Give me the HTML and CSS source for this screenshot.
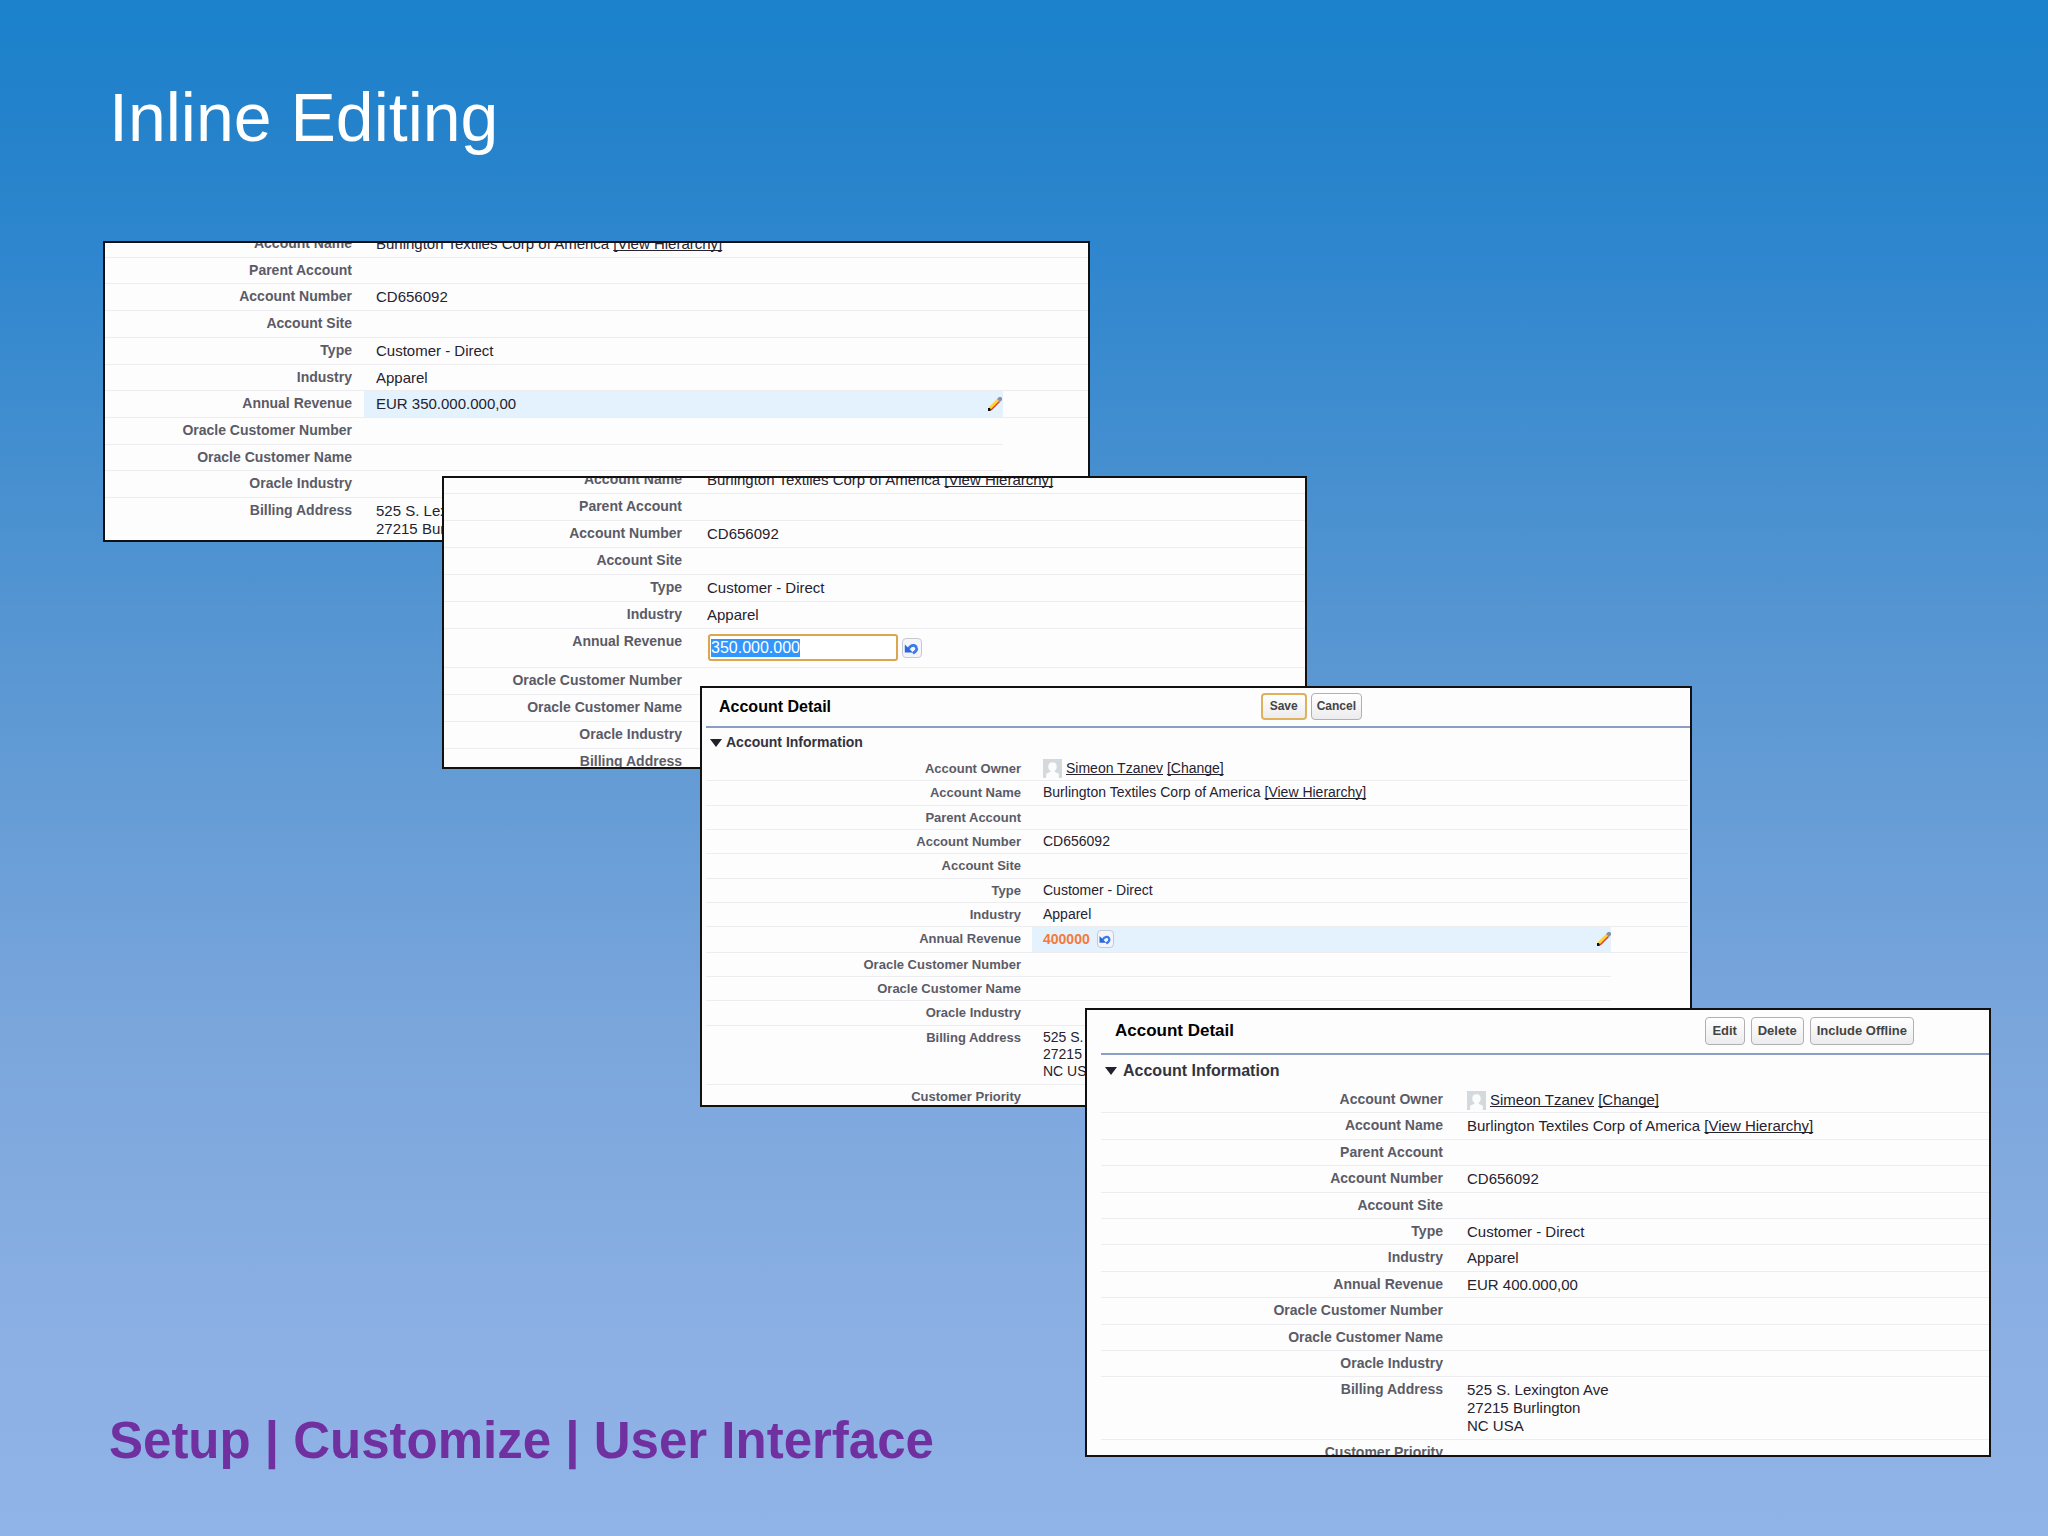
FILE: index.html
```
<!DOCTYPE html>
<html lang="en">
<head>
  <meta charset="UTF-8">
  <title>Inline Editing</title>
  <link rel="stylesheet" href="styles.css">
</head>
<body>
  <!-- shared icons -->
  <svg class="sprite" aria-hidden="true">
    <symbol id="icon-undo" viewBox="0 0 20 20">
      <path d="M6 11c3-5 8-5 9-1 1 2-1 4-4 6" fill="none" stroke="#3c78e6" stroke-width="3"/>
      <path d="M2 6v9h9z" fill="#2a66dc"/>
    </symbol>
    <symbol id="icon-pencil" viewBox="0 0 14 14">
      <path d="M1 10 9 2l3 3-8 8-3 1z" fill="#ffd23c"/>
      <path d="m3 12 8-8 1 1-8 8-2 1z" fill="#d9442e"/>
      <path d="m9 2 2-2h2l1 1v2l-2 2z" fill="#8d8fa8"/>
      <path d="M0 11h2l1 2-1 1H0z" fill="#111"/>
    </symbol>
    <symbol id="icon-user" viewBox="0 0 18 18">
      <path d="M0 0h18v18H0z" fill="#d3d9dd"/>
      <path d="M9 3c3 0 4 2 4 4s-1 4-2 4v1l4 2v4H3v-4l4-2v-1C6 11 5 9 5 7s1-4 4-4z" fill="#fbfcfc"/>
    </symbol>
  </svg>

  <main class="slide">
    <h1 class="slide-title">Inline Editing</h1>

    <section class="shot shot-hover">
      <table class="details">
        <tr><th scope="row">Account Name</th><td>Burlington Textiles Corp of America <a href="#">[View Hierarchy]</a></td><td></td></tr>
        <tr><th scope="row">Parent Account</th><td></td><td></td></tr>
        <tr><th scope="row">Account Number</th><td>CD656092</td><td></td></tr>
        <tr><th scope="row">Account Site</th><td></td><td></td></tr>
        <tr><th scope="row">Type</th><td>Customer - Direct</td><td></td></tr>
        <tr><th scope="row">Industry</th><td>Apparel</td><td></td></tr>
        <tr><th scope="row">Annual Revenue</th>
          <td class="active"><div class="cell">EUR 350.000.000,00 <svg class="pencil"><use href="#icon-pencil"/></svg></div></td><td></td></tr>
        <tr class="short"><th scope="row">Oracle Customer Number</th><td></td><td></td></tr>
        <tr class="short"><th scope="row">Oracle Customer Name</th><td></td><td></td></tr>
        <tr class="short"><th scope="row">Oracle Industry</th><td></td><td></td></tr>
        <tr class="short"><th scope="row">Billing Address</th><td>525 S. Lexington Ave<br>27215 Burlington<br>NC USA</td><td></td></tr>
      </table>
    </section>

    <section class="shot shot-edit">
      <table class="details">
        <tr><th scope="row">Account Name</th><td>Burlington Textiles Corp of America <a href="#">[View Hierarchy]</a></td></tr>
        <tr><th scope="row">Parent Account</th><td></td></tr>
        <tr><th scope="row">Account Number</th><td>CD656092</td></tr>
        <tr><th scope="row">Account Site</th><td></td></tr>
        <tr><th scope="row">Type</th><td>Customer - Direct</td></tr>
        <tr><th scope="row">Industry</th><td>Apparel</td></tr>
        <tr><th scope="row"><label for="revenue">Annual Revenue</label></th>
          <td class="editing"><div class="field">
            <input id="revenue" type="text" value="350.000.000">
            <button class="undo" type="button" aria-label="Undo"><svg><use href="#icon-undo"/></svg></button>
          </div></td></tr>
        <tr><th scope="row">Oracle Customer Number</th><td></td></tr>
        <tr><th scope="row">Oracle Customer Name</th><td></td></tr>
        <tr><th scope="row">Oracle Industry</th><td></td></tr>
        <tr><th scope="row">Billing Address</th><td></td></tr>
      </table>
    </section>

    <section class="shot shot-changed">
      <header class="shot-header">
        <h2>Account Detail</h2>
        <div class="buttons">
          <button class="btn focus" type="button">Save</button>
          <button class="btn" type="button">Cancel</button>
        </div>
      </header>
      <h3>Account Information</h3>
      <table class="details">
        <tr><th scope="row">Account Owner</th><td><svg class="avatar"><use href="#icon-user"/></svg><a href="#">Simeon Tzanev</a> <a href="#">[Change]</a></td><td></td></tr>
        <tr><th scope="row">Account Name</th><td>Burlington Textiles Corp of America <a href="#">[View Hierarchy]</a></td><td></td></tr>
        <tr><th scope="row">Parent Account</th><td></td><td></td></tr>
        <tr><th scope="row">Account Number</th><td>CD656092</td><td></td></tr>
        <tr><th scope="row">Account Site</th><td></td><td></td></tr>
        <tr><th scope="row">Type</th><td>Customer - Direct</td><td></td></tr>
        <tr><th scope="row">Industry</th><td>Apparel</td><td></td></tr>
        <tr><th scope="row">Annual Revenue</th>
          <td class="active"><div class="cell"><strong>400000</strong>
            <button class="undo" type="button" aria-label="Undo"><svg><use href="#icon-undo"/></svg></button>
            <svg class="pencil"><use href="#icon-pencil"/></svg></div></td><td></td></tr>
        <tr class="short"><th scope="row">Oracle Customer Number</th><td></td><td></td></tr>
        <tr class="short"><th scope="row">Oracle Customer Name</th><td></td><td></td></tr>
        <tr class="short"><th scope="row">Oracle Industry</th><td></td><td></td></tr>
        <tr class="short"><th scope="row">Billing Address</th><td>525 S. Lexington Ave<br>27215 Burlington<br>NC USA</td><td></td></tr>
        <tr class="short"><th scope="row">Customer Priority</th><td></td><td></td></tr>
      </table>
    </section>

    <section class="shot shot-saved">
      <header class="shot-header">
        <h2>Account Detail</h2>
        <div class="buttons">
          <button class="btn" type="button">Edit</button>
          <button class="btn" type="button">Delete</button>
          <button class="btn" type="button">Include Offline</button>
        </div>
      </header>
      <h3>Account Information</h3>
      <table class="details">
        <tr><th scope="row">Account Owner</th><td><svg class="avatar"><use href="#icon-user"/></svg><a href="#">Simeon Tzanev</a> <a href="#">[Change]</a></td></tr>
        <tr><th scope="row">Account Name</th><td>Burlington Textiles Corp of America <a href="#">[View Hierarchy]</a></td></tr>
        <tr><th scope="row">Parent Account</th><td></td></tr>
        <tr><th scope="row">Account Number</th><td>CD656092</td></tr>
        <tr><th scope="row">Account Site</th><td></td></tr>
        <tr><th scope="row">Type</th><td>Customer - Direct</td></tr>
        <tr><th scope="row">Industry</th><td>Apparel</td></tr>
        <tr><th scope="row">Annual Revenue</th><td>EUR 400.000,00</td></tr>
        <tr><th scope="row">Oracle Customer Number</th><td></td></tr>
        <tr><th scope="row">Oracle Customer Name</th><td></td></tr>
        <tr><th scope="row">Oracle Industry</th><td></td></tr>
        <tr><th scope="row">Billing Address</th><td>525 S. Lexington Ave<br>27215 Burlington<br>NC USA</td></tr>
        <tr><th scope="row">Customer Priority</th><td></td></tr>
      </table>
    </section>

    <p class="path">Setup | Customize | User Interface</p>
  </main>

  <script>
    document.getElementById('revenue').select();
  </script>
</body>
</html>
```

FILE: styles.css
```
* {
    box-sizing: border-box;
}
body {
    margin: 0;
    font-family: "Liberation Sans", Arial, sans-serif;
}
.sprite {
    display: none;
}

/* the four shots overlap, so they share one grid */
.slide {
    display: grid;
    grid-template-columns: 103fr 339fr 258fr 385fr 5fr 217fr 385fr 299fr 57fr;
    grid-template-rows: 241px 235px 66px 144px 83px 239px 99px 350px 1fr;
    min-height: 100vh;
    background: linear-gradient(#1b82cb 0%, #2482cb 8%, #2e86ce 16%, #4890d0 32%, #5c98d3 45%, #7aa6dc 67%, #8cb0e4 88%, #90b3e8 100%);
}
.slide-title {
    grid-area: 1 / 2 / 2 / 9;
    margin: 78px 0 0 6px;
    font-size: 68px;
    line-height: 78px;
    font-weight: 400;
    color: #fff;
}
.path {
    grid-area: 8 / 2 / 9 / 5;
    align-self: end;
    margin: 0 0 -13px 6px;
    font-size: 51px;
    line-height: 58px;
    font-weight: 700;
    color: #7030a0;
    white-space: nowrap;
}

.shot {
    overflow: hidden;
    border: 2px solid #111;
    background: #fdfdfe;
    font-size: 15px;
    line-height: 18px;
    color: #26222e;
    /* rows keep their own height, the frame cuts them */
    height: 0;
    min-height: 100%;
}
.shot-hover {
    grid-area: 2 / 2 / 4 / 6;
}
.shot-edit {
    grid-area: 3 / 3 / 6 / 7;
}
.shot-changed {
    grid-area: 5 / 4 / 8 / 8;
    font-size: 14px;
    line-height: 17px;
}
.shot-saved {
    grid-area: 7 / 5 / 9 / 9;
}

.details {
    width: 100%;
    table-layout: fixed;
    border-spacing: 0;
}
.details th,
.details td {
    height: 26px;
    padding: 4px 0 3px 12px;
    border-bottom: 1px solid #ececf1;
    text-align: left;
    vertical-align: top;
    white-space: nowrap;
}
.details th {
    padding: 3px 12px 3px 0;
    font-size: 14px;
    text-align: right;
    color: #5b5b66;
}
.details .short td:last-child {
    border-bottom: 0;
}
.details a {
    color: inherit;
    text-decoration-skip-ink: none;
}
.details .active {
    background: #e3f2fd;
}
.cell {
    display: flex;
    align-items: center;
}
.cell strong {
    color: #f4793b;
}
.pencil {
    width: 14px;
    height: 14px;
    margin-left: auto;
    margin-right: 1px;
}
.avatar {
    width: 19px;
    height: 19px;
    margin: -4px 4px -2px 0;
    vertical-align: middle;
}

.shot-hover .details {
    height: 331px;
    margin-top: -12px;
}
.shot-hover th {
    width: 259px;
}
.shot-hover td:last-child {
    width: 85px;
}

.shot-edit .details {
    margin-top: -11px;
}
.shot-edit th {
    width: 250px;
}
.shot-edit .details th,
.shot-edit .details td {
    height: 27px;
}
.shot-edit .details td {
    padding-left: 13px;
}
.shot-edit .details .editing {
    height: 39px;
    padding: 5px 0 6px 14px;
}
.field {
    display: flex;
    align-items: center;
    gap: 4px;
}
.field input {
    width: 190px;
    height: 27px;
    padding: 0 1px;
    border: 2px solid #dba64f;
    border-radius: 3px;
    outline: 0;
    background: #fff;
    font: 16px "Liberation Sans", Arial, sans-serif;
}
.field input::selection {
    background: #3297fd;
    color: #fff;
}
.undo {
    display: flex;
    width: 20px;
    height: 20px;
    padding: 0;
    border: 1px solid #c6c9d4;
    border-radius: 4px;
    background: #f3f5fa;
}
.undo svg {
    width: 100%;
    height: 100%;
}

.shot-header {
    display: flex;
    align-items: center;
    justify-content: space-between;
    height: 45px;
    margin-left: 14px;
    padding: 0 75px 2px 14px;
    border-bottom: 2px solid #8b9fc5;
}
.shot h2 {
    margin: 0;
    font-size: 17px;
    color: #000;
}
.shot h3 {
    display: flex;
    align-items: center;
    gap: 6px;
    height: 32px;
    margin: 0 0 0 18px;
    font-size: 16px;
    color: #33333d;
}
.shot h3::before {
    content: "";
    border: 6px solid transparent;
    border-top: 8px solid #22222c;
    border-bottom: 0;
}
.buttons {
    display: flex;
    gap: 6px;
}
.btn {
    min-width: 40px;
    height: 28px;
    padding: 0 6px;
    border: 1px solid #b0b0b4;
    border-radius: 4px;
    background: linear-gradient(#fff, #ececee);
    font: bold 13px "Liberation Sans", Arial, sans-serif;
    color: #444;
}
.btn.focus {
    min-width: 46px;
    border: 2px solid #e0b15c;
}

.shot-changed .shot-header {
    height: 40px;
    margin-left: 4px;
    padding: 0 328px 2px 13px;
}
.shot-changed h2 {
    font-size: 16px;
}
.shot-changed h3 {
    gap: 4px;
    height: 29px;
    margin-left: 8px;
    font-size: 14px;
}
.shot-changed .buttons {
    gap: 4px;
}
.shot-changed .btn {
    height: 27px;
    padding: 0 5px;
    font-size: 12px;
}
.shot-changed .details {
    width: calc(100% - 6px);
    height: 352px;
    margin: 0 2px 0 4px;
}
.shot-changed .details th,
.shot-changed .details td {
    height: 24px;
    padding-top: 3px;
    padding-left: 11px;
}
.shot-changed .details th {
    width: 326px;
    padding-right: 11px;
    font-size: 13px;
}
.shot-changed td:last-child {
    width: 77px;
}
.shot-changed .pencil {
    margin-right: 0;
}
.shot-changed .undo {
    width: 17px;
    height: 18px;
    margin-left: 7px;
}

.shot-saved .details {
    width: calc(100% - 14px);
    height: 380px;
    margin-left: 14px;
}
.shot-saved th {
    width: 354px;
}
```
